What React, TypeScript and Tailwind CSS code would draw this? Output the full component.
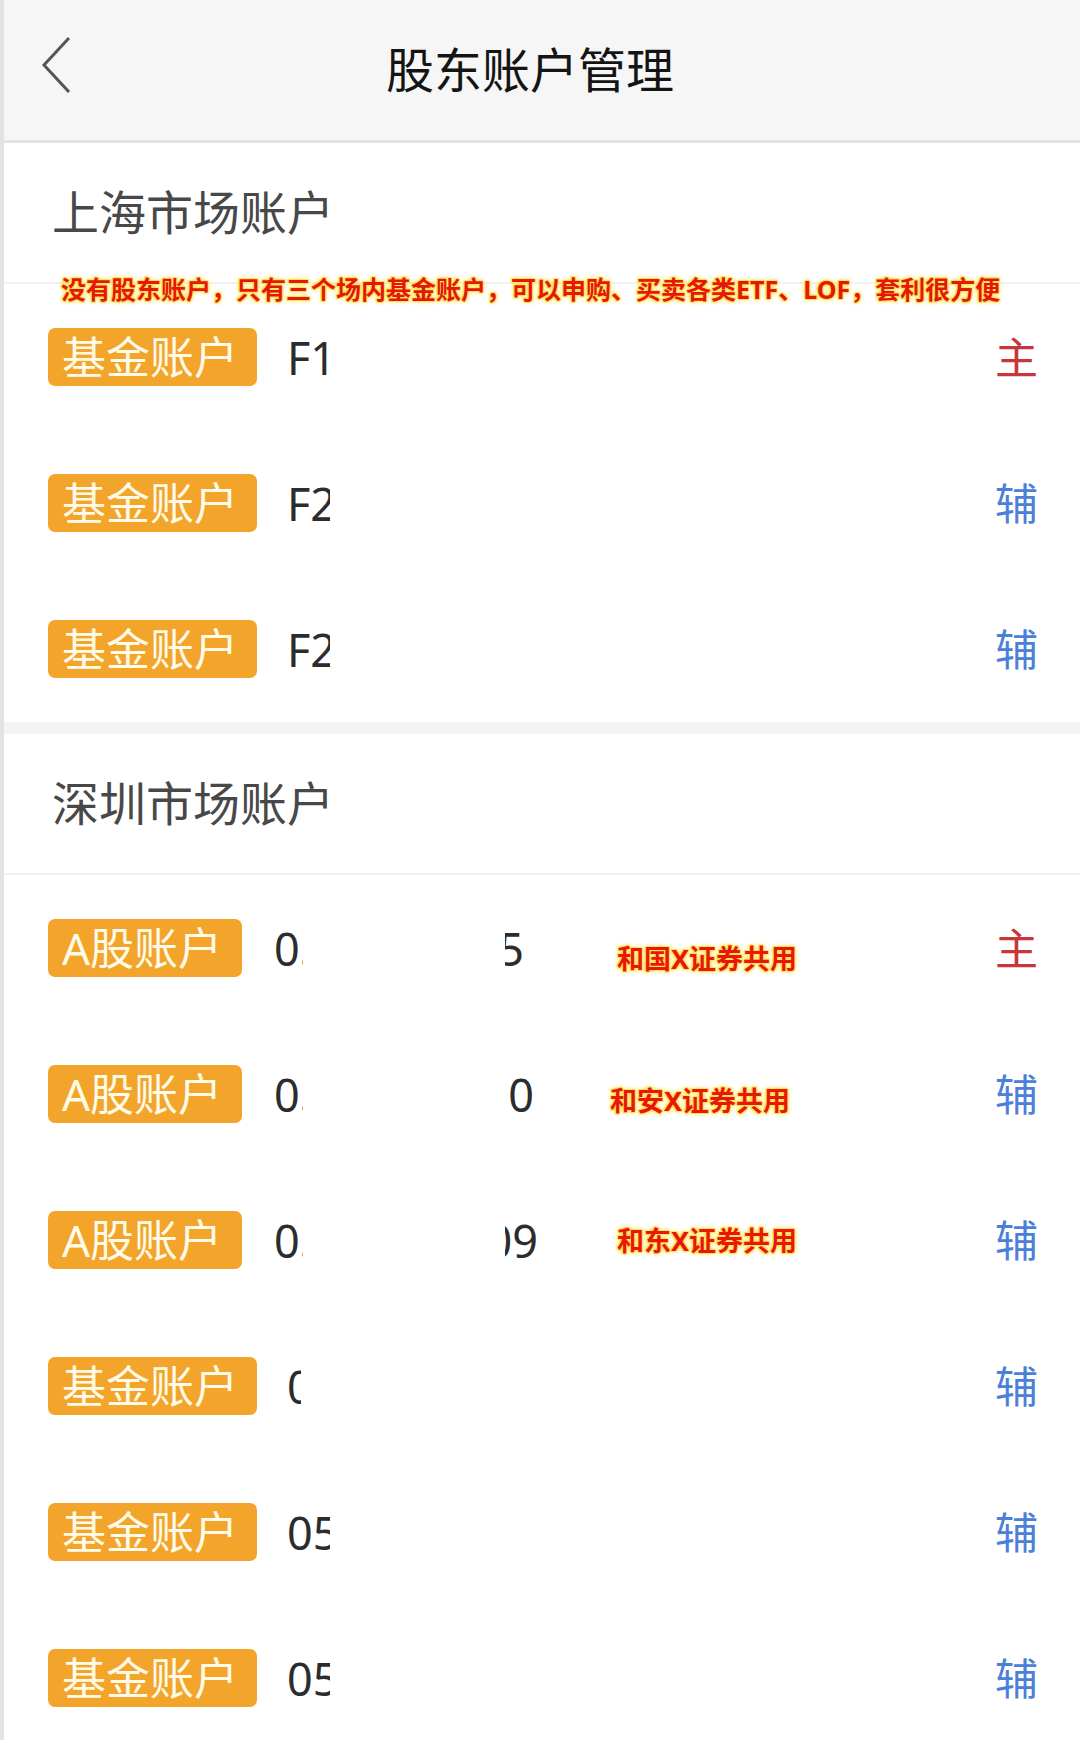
const glow =
  '[text-shadow:1px_1px_0_#ffe45a,-1px_-1px_0_#ffe45a,1px_-1px_0_#ffe45a,-1px_1px_0_#ffe45a,0_0_5px_#ffd400]';

function BackIcon() {
  return (
    <svg width="32" height="58" viewBox="0 0 32 58" fill="none" aria-hidden>
      <polyline points="29,2 4,29 29,56" stroke="#555" strokeWidth="3" strokeLinejoin="miter" />
    </svg>
  );
}

function Badge({ label, wide }: { label: string; wide?: boolean }) {
  return (
    <span
      className={`flex h-[58px] shrink-0 items-center rounded-[7px] bg-[#f3a52b] text-[44px] leading-none text-[#fffbe8] ${
        wide ? 'w-[209px] pl-[14px]' : 'w-[194px] pl-[14px]'
      }`}
    >
      {label}
    </span>
  );
}

// masked account number fragments: clip shows only part of the digits
function Clip({ text, className, end }: { text: string; className: string; end?: boolean }) {
  return (
    <span
      className={`flex overflow-hidden whitespace-nowrap text-[45px] leading-none text-[#2c2c2c] ${
        end ? 'justify-end' : ''
      } ${className}`}
    >
      <span className="shrink-0">{text}</span>
    </span>
  );
}

function Marker({ main }: { main?: boolean }) {
  return (
    <span className={`ml-auto text-[43px] leading-none ${main ? 'text-[#c7363a]' : 'text-[#4b80d8]'}`}>
      {main ? '主' : '辅'}
    </span>
  );
}

function Row({ children }: { children: React.ReactNode }) {
  return <div className="flex h-[146px] items-center pl-[44px] pr-[42px]">{children}</div>;
}

function Note({ text, className }: { text: string; className: string }) {
  return (
    <span className={`text-[27px] font-bold leading-none text-[#e8170c] ${glow} ${className}`}>{text}</span>
  );
}

function SectionTitle({ title }: { title: string }) {
  return (
    <div className="flex h-[141px] items-center border-b-2 border-[#f1f1f1] pl-[48px] text-[47px] text-[#484848]">
      {title}
    </div>
  );
}

export default function App() {
  return (
    <div className="h-[1740px] w-[1080px] overflow-hidden border-l-4 border-[#e3e3e3] bg-white font-['Noto_Sans','Noto_Sans_CJK_SC',sans-serif]">
      <header className="relative flex h-[143px] items-center justify-center border-b-[3px] border-[#e4e4e4] bg-[#f6f6f6] pr-[24px]">
        <span className="absolute left-[36px] top-[36px]">
          <BackIcon />
        </span>
        <h1 className="text-[48px] font-normal text-[#141414]">股东账户管理</h1>
      </header>

      <section className="relative">
        <SectionTitle title="上海市场账户" />
        <span
          className={`absolute left-[57px] top-[129px] whitespace-nowrap text-[25px] font-bold leading-[34px] text-[#e3180b] ${glow}`}
        >
          没有股东账户，只有三个场内基金账户，可以申购、买卖各类ETF、LOF，套利很方便
        </span>
        <Row>
          <Badge label="基金账户" wide />
          <Clip text="F1" className="ml-[30px] w-[46px]" />
          <Marker main />
        </Row>
        <Row>
          <Badge label="基金账户" wide />
          <Clip text="F2" className="ml-[30px] w-[43px]" />
          <Marker />
        </Row>
        <Row>
          <Badge label="基金账户" wide />
          <Clip text="F2" className="ml-[30px] w-[43px]" />
          <Marker />
        </Row>
      </section>

      <div className="h-[12px] bg-[#f4f4f4]" />

      <section>
        <SectionTitle title="深圳市场账户" />
        <Row>
          <Badge label="A股账户" />
          <Clip text="05" className="ml-[32px] w-[29px]" />
          <Clip text="5" end className="ml-[202px] w-[19px]" />
          <Note text="和国X证券共用" className="ml-[93px] translate-y-[10px]" />
          <Marker main />
        </Row>
        <Row>
          <Badge label="A股账户" />
          <Clip text="05" className="ml-[32px] w-[29px]" />
          <Clip text="0" end className="ml-[202px] w-[29px]" />
          <Note text="和安X证券共用" className="ml-[76px] translate-y-[6px]" />
          <Marker />
        </Row>
        <Row>
          <Badge label="A股账户" />
          <Clip text="05" className="ml-[32px] w-[29px]" />
          <Clip text="09" end className="ml-[202px] w-[33px]" />
          <Note text="和东X证券共用" className="ml-[79px]" />
          <Marker />
        </Row>
        <Row>
          <Badge label="基金账户" wide />
          <Clip text="05" className="ml-[30px] w-[14px]" />
          <Marker />
        </Row>
        <Row>
          <Badge label="基金账户" wide />
          <Clip text="05" className="ml-[30px] w-[43px]" />
          <Marker />
        </Row>
        <Row>
          <Badge label="基金账户" wide />
          <Clip text="05" className="ml-[30px] w-[43px]" />
          <Marker />
        </Row>
      </section>
    </div>
  );
}
